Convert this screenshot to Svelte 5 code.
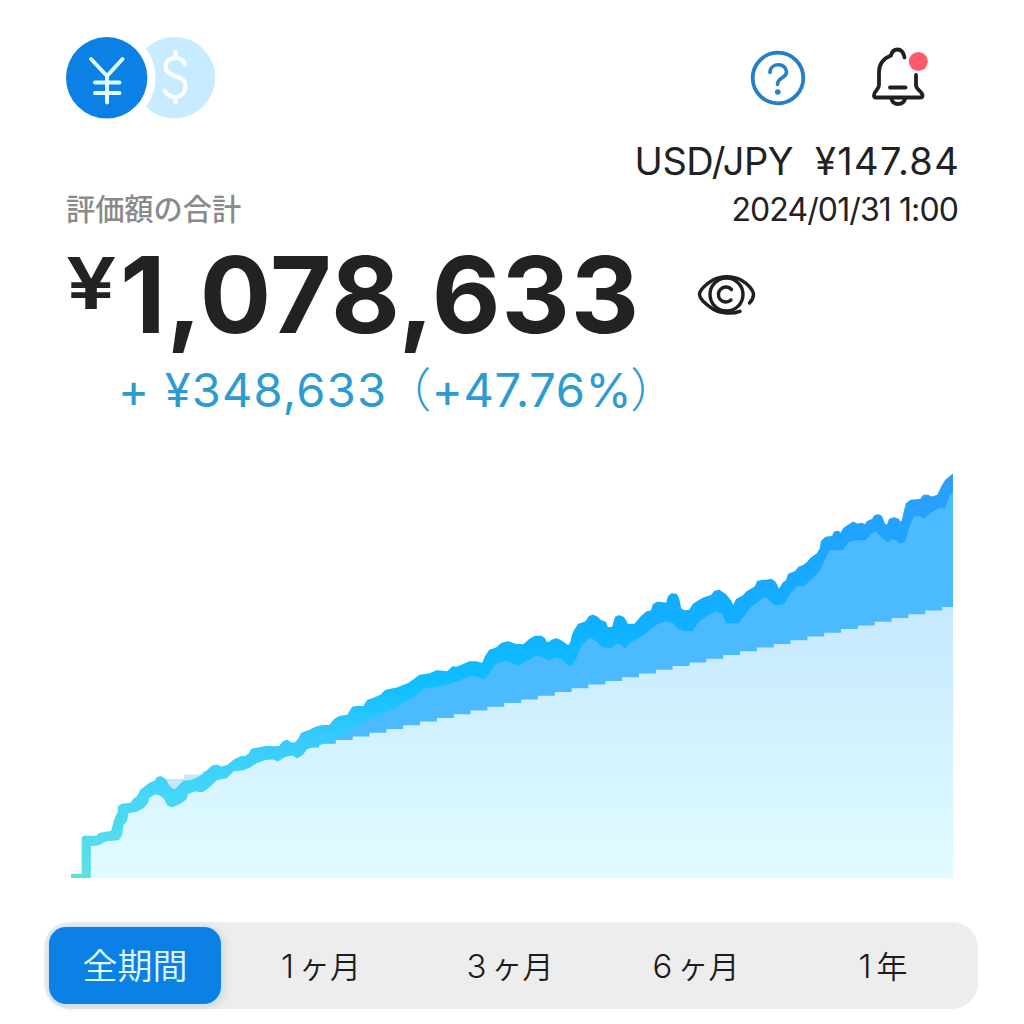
<script>
  const tabs = [
    { n: '', unit: '全期間' },
    { n: '1', unit: 'ヶ月' },
    { n: '3', unit: 'ヶ月' },
    { n: '6', unit: 'ヶ月' },
    { n: '1', unit: '年' },
  ];
  let active = $state(0);

  // Upper and lower edges of the valuation line, in chart coordinates.
  const upper = '71,875 83,875 83,838 84,837 97,837 100,834 112,832 114,825 116,818 119,812 119,807 122,805 131,804 134,800 138,797 141,791 146,787 150,784 155,782 158,778 161,777.5 165,780 168,786 171,789 175,791 180,786 184,782 192,781 197,779 203,775 208,771 213,766.5 217,766 221,768 228,766 234,761 241,757.5 246,757 250,754 252,750 262,748 266,747 274,747.5 280,747 283,743 287,741 291,743.5 295,744 299,740 302,734 310,731 317,727.5 322,726.5 330,726 335,720 340,717 348,716 353,708 358,707 364,707.500 368,701 374,699 381,696 386,691 398,688.500 408,684.500 414,680.500 420,676 430,674.500 437,671.500 448,672.500 453,667.500 457,668 463,665.500 470,662.500 476,662.500 483,664.500 486,657 490,651 497,648.500 502,644 508,642.500 515,645 524,645.500 530,640 535,637 541,637 544,639 546,643 549,643.500 552,641 556,639.500 560,641 563,643 567,646 569,646 571,644 573,636 575,631 579,625 586,622.500 590,617 593,616 597,618 600,621 605,623 607,628.500 613,628 616,618 619,616.500 623,618 625,621 627,625 635,625 641,618 647,612.500 652,611.500 654,605 658,603 667,604 669,597 672,594.500 676,595 678,599 680,609 684,611.500 690,611 694,604.500 703,599 712,596 715,592 719,591 725,595 730,601 733,608 737,600 743,597 747,592.500 752,589.500 756,587 758,582 763,581 767,581 771,580 774,582 776,585 778,591 781,588 784,583 787,581 789,575 796,572 799,568 803,566.500 808,563 811,559 818,554 821,549 822,542 826,538 833,537 835,532.500 838,532 841,535 844,529 850,525 853,523 857,525 862,524 865,526 868,522 873,520 875,516.500 878,515.500 881,517 884,525 888,526 890,520 894,518.500 898,520 900,524 903,521 905,512 907,504 911,501 921,500 924,496 928,496 931,498 938,496 942,488 946,481 953,475'.split(' ');
  const lower = '71,878 89.5,878 89.5,845 98,844 106,840 118,839 121,834 122,825 126,820 127,812 135,811 143,807 147,802 148,797 155,793 160,794 165,798 168,804 172,806 179,803 185,799 187,793 195,790 202,791 209,786 216,779 226,777 233,770 243,769 250,766 256,762 264,759 273,758 278,760 284,756 292,754 297,757 302,754 306,748 319,744 335,738 350,730 365,720 380,714 396,706 413,696 422,688 432,686 445,684 458,680 468,675 477,675 484,678 490,670 495,663 506,659 513,662 518,664 527,659 537,654 545,657 549,659 555,656 562,658 570,665 575,658 580,645 590,636 597,640 603,646 610,647 616,643 620,642 625,647 630,641 640,636 648,630 657,623 665,620 674,622 678,627 683,630 692,630 697,622 706,615 716,610 723,613 727,622 738,622 744,614 750,606 757,601 763,596 768,597 774,603 777,604 783,603 787,596 796,585 803,585 809,580 818,571 824,559 829,549 837,549 842,549 848,541 856,539 865,539 870,533 876,530 882,536 888,541 891,538 897,539 900,542 904,541 908,527 913,515 920,515 924,517 929,513 938,507 944,507 948,496 953,489'.split(' ');
  const xOf = (p) => Number(p.split(',')[0]);

  const line = [...upper, ...[...lower].reverse()].join(' ');
  const profit = ['302,748', ...upper.filter((p) => xOf(p) >= 302), '953,640', '320,750'].join(' ');
  const early = [...lower.filter((p) => xOf(p) <= 302 && xOf(p) >= 89), '303,878'].join(' ');

  // Contributions rise by a fixed amount at a fixed interval.
  const stepW = 16.84;
  const stepH = 3.7;
  let steps = 'M302 878V747.5';
  for (let i = 0; i < 38; i++) {
    steps += `H${(319 + i * stepW).toFixed(1)}V${(743.8 - i * stepH).toFixed(1)}`;
  }
  steps += 'H953V878Z';
</script>

<main>
  <header>
    <svg class="coins" width="150" height="82" viewBox="0.500 0.500 150 82">
      <circle cx="109" cy="41.200" r="40.700" fill="#c8ecff" />
      <circle cx="41" cy="41.200" r="49" fill="#fff" />
      <circle cx="41.200" cy="41.300" r="40.700" fill="#0b81e5" />
      <path d="M25.500 22.500 41.500 39.500 57 22.500M41.500 39V66M29.500 46H54M29.500 56.500H54" fill="none" stroke="#e2fbff" stroke-width="4" stroke-linecap="round" stroke-linejoin="round" />
      <path d="M110 15.500V21M110 60.500V66M119.500 28C118 23.500 114.500 21.500 110 21.500C104 21.500 100 25 100 30C100 41.500 120 37 120 49.500C120 56 115.500 60.500 110 60.500C104.500 60.500 101 58 99 54" fill="none" stroke="#fff" stroke-width="4" stroke-linecap="round" />
    </svg>
    <div class="actions">
      <svg width="56" height="56" viewBox="0 0 56 56" fill="none" stroke="#247fc7" stroke-linecap="round">
        <circle cx="28" cy="28" r="25.300" stroke-width="3.800" />
        <path d="M20 22.500C20 17.500 24 14.800 28.500 14.800C33 14.800 36.500 17.800 36.500 22C36.500 28.500 27.500 27 27.500 34.500" stroke-width="3.600" />
        <circle cx="27.800" cy="42" r="2.800" fill="#247fc7" stroke="none" />
      </svg>
      <svg width="58" height="62" viewBox="-1 0 58 62" fill="none" stroke="#202020" stroke-width="3.800" stroke-linecap="round" stroke-linejoin="round">
        <path d="M33.500 10.500C32.500 5 30 2.500 26.500 2.500C23 2.500 20.800 5 20 8.500C12.500 11.500 8 17 8 25V38C8 43 3 43.500 3 48.500Q3 50.500 5 50.500H49Q51.500 50.500 51.500 48.500C51.500 44 45 43 45 38V28" />
        <path d="M19 40.500H34.500" />
        <path d="M20.500 52C21.500 56 23.500 57 27 57C30.500 57 33 56 34 52" />
        <circle cx="47.300" cy="14.500" r="9.500" fill="#fd5b6b" stroke="none" />
      </svg>
    </div>
  </header>

  <div class="rate"><span class="pair">USD/JPY</span><span class="price">¥147.84</span></div>
  <div class="meta">
    <span class="label">評価額の合計</span>
    <time>2024/01/31 1:00</time>
  </div>

  <div class="total">
    <span class="yen">¥</span><span class="amount">1,078,633</span>
    <svg width="60" height="44" viewBox="0 0 60 44" fill="none" stroke="#1f1f1f" stroke-width="3.400" stroke-linecap="round">
      <path d="M43 38.300C36 41 24 41 16 36C9 31.500 2.500 26 2.500 21.500C2.500 17 9 11 16 7C24 2.500 36 2.500 44 7C51 11 56.500 17 56.500 21.500C56.500 24.500 55 27.500 52.500 30" />
      <circle cx="29.500" cy="21.500" r="16.500" />
      <path d="M34.500 16.500A7.500 7.500 0 1 0 34 27" />
    </svg>
  </div>
  <div class="change"><span class="gain">+ ¥348,633</span><span class="pct"><i>（</i>+47.76%<i class="close">）</i></span></div>

  <svg class="chart" width="882" height="404" viewBox="71 474 882 404">
    <defs>
      <linearGradient id="stroke" gradientUnits="userSpaceOnUse" x1="0" y1="878" x2="0" y2="474">
        <stop offset="0" stop-color="#5fe0e0" />
        <stop offset=".2" stop-color="#45d7f6" />
        <stop offset=".34" stop-color="#38cbfd" />
        <stop offset=".48" stop-color="#0fbeff" />
        <stop offset=".64" stop-color="#11afff" />
        <stop offset=".85" stop-color="#1fa4ff" />
        <stop offset="1" stop-color="#2e9df8" />
      </linearGradient>
      <linearGradient id="base" gradientUnits="userSpaceOnUse" x1="0" y1="600" x2="0" y2="878">
        <stop offset="0" stop-color="#c6e8ff" />
        <stop offset="1" stop-color="#e0fcff" />
      </linearGradient>
    </defs>
    <path d="M164 779H184V774.500H202V771H214V780L190 790H172Z" fill="#c3e7fb" />
    <polygon points={early} fill="url(#base)" />
    <polygon points={profit} fill="#4bbaff" />
    <path d={steps} fill="url(#base)" />
    <polygon points={line} fill="url(#stroke)" stroke="url(#stroke)" stroke-width="2.600" stroke-linejoin="round" />
  </svg>

  <nav>
    {#each tabs as tab, i}
      <button class:active={i === active} onclick={() => (active = i)}>
        {#if tab.n}<span class="num">{tab.n}</span>{/if}<span class="unit">{tab.unit}</span>
      </button>
    {/each}
  </nav>
</main>

<style>
  :global(body) {
    background: #fff;
  }
  main {
    box-sizing: border-box;
    width: 1024px;
    height: 1024px;
    overflow: hidden;
    padding: 37px 44px 0 44px;
    display: flex;
    flex-direction: column;
    font-family: Inter, 'Noto Sans CJK JP', sans-serif;
    color: #222;
    white-space: nowrap;
  }
  svg {
    display: block;
    flex: none;
  }
  header {
    display: flex;
    justify-content: space-between;
    align-items: center;
    height: 82px;
    padding: 0 52px 0 22px;
  }
  .actions {
    display: flex;
    align-items: center;
    gap: 64px;
  }
  .rate {
    display: flex;
    justify-content: flex-end;
    gap: 22px;
    height: 40px;
    margin-top: 22px;
    padding-right: 20px;
    font-size: 38px;
    line-height: 40px;
  }
  .pair {
    letter-spacing: -0.45px;
  }
  .price {
    letter-spacing: 1.3px;
  }
  .meta {
    display: flex;
    justify-content: space-between;
    align-items: center;
    height: 32px;
    margin-top: 13px;
    padding: 0 22px;
    line-height: 32px;
  }
  .label {
    color: #8a8a8a;
    font-size: 29.200px;
    font-weight: 500;
  }
  time {
    font-size: 32px;
    letter-spacing: -0.9px;
  }
  .total {
    display: flex;
    height: 100px;
    margin-top: 19px;
    padding-left: 22px;
    font-weight: 600;
  }
  .yen {
    width: 54px;
    font-size: 72px;
    line-height: 76px;
    transform: scaleX(1.24);
    transform-origin: left;
  }
  .amount {
    width: 577px;
    font-size: 106px;
    font-weight: 650;
    line-height: 100px;
    letter-spacing: 0.85px;
  }
  .total svg {
    margin-top: 28px;
  }
  .change {
    display: flex;
    height: 48px;
    margin-top: 21px;
    padding-left: 74px;
    color: #2e9bd0;
    font-size: 47px;
    line-height: 48px;
  }
  .gain {
    letter-spacing: 1.2px;
  }
  .pct {
    margin-left: -3px;
    letter-spacing: 0.6px;
  }
  .change i {
    font-style: normal;
    font-weight: 300;
  }
  .change .close {
    margin-left: -2px;
  }
  .chart {
    margin: 60px 0 0 27px;
  }
  nav {
    box-sizing: border-box;
    display: grid;
    grid-template-columns: 172px 200px 178px 194px 1fr;
    width: 934px;
    height: 87px;
    margin-top: 44px;
    padding: 5px;
    border-radius: 26px;
    background: #ededed;
  }
  button {
    display: flex;
    justify-content: center;
    align-items: center;
    gap: 5px;
    border: 0;
    padding: 2px 0 0;
    background: none;
    color: #1c1c1c;
    font: 350 31px/75px Inter, 'Noto Sans CJK JP', sans-serif;
    white-space: nowrap;
  }
  .num {
    font-size: 33px;
    font-weight: 350;
  }
  .active {
    border-radius: 17px;
    background: #0b81e5;
    color: #e2fbff;
    font-size: 35px;
    box-shadow: 0 0 3px 2px #cfe3f8, 3px 3px 8px rgba(0, 0, 0, 0.1);
  }
</style>
